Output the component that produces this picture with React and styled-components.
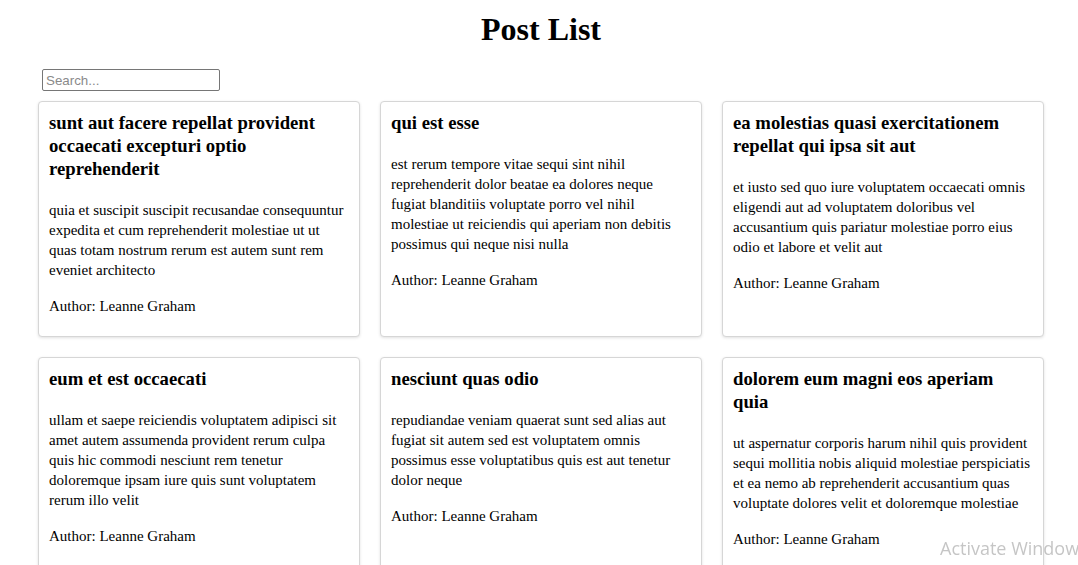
import React from "react";
import styled, { createGlobalStyle } from "styled-components";

const GlobalStyle = createGlobalStyle`
  html, body {
    margin: 0;
    padding: 0;
    background: #ffffff;
    font-family: "Liberation Serif", "Times New Roman", serif;
    color: #000;
  }
`;

const Page = styled.div`
  width: 1006px;
  margin-left: 38px;
  padding-top: 11px;
`;

const Title = styled.h1`
  margin: 0 0 21px;
  text-align: center;
  font-size: 32px;
  font-weight: bold;
  line-height: 37px;
`;

const SearchRow = styled.div`
  padding: 0 4px;
  margin-bottom: 10px;
  display: flex;
`;

const SearchInput = styled.input`
  box-sizing: border-box;
  width: 178px;
  height: 22px;
  padding: 1px 3px;
  border: 1px solid #767676;
  border-radius: 2px;
  font-family: "Liberation Sans", Arial, sans-serif;
  font-size: 13.33px;
  color: #000;
  outline: none;
  &::placeholder {
    color: #8a8a8a;
  }
`;

const Grid = styled.div`
  display: grid;
  grid-template-columns: repeat(3, 1fr);
  gap: 20px;
`;

const Card = styled.div`
  box-sizing: border-box;
  border: 1px solid #d6d6d6;
  border-radius: 4px;
  padding: 9px 10px 10px;
  box-shadow: 0 1px 3px rgba(0, 0, 0, 0.12);
  background: #fff;
`;

const CardTitle = styled.h3`
  margin: 0 0 20px;
  font-size: 18.72px;
  font-weight: bold;
  line-height: 23px;
`;

const Body = styled.p`
  margin: 0 0 16px;
  font-size: 15px;
  line-height: 20px;
`;

const Author = styled.p`
  margin: 0 0 10px;
  font-size: 15px;
  line-height: 20px;
`;

const Watermark = styled.div`
  position: fixed;
  left: 940px;
  top: 536px;
  font-family: "Open Sans", "Noto Sans", sans-serif;
  font-size: 18px;
  color: rgba(150, 150, 150, 0.55);
  white-space: nowrap;
  pointer-events: none;
`;

const posts = [
  {
    id: 1,
    title: "sunt aut facere repellat provident occaecati excepturi optio reprehenderit",
    body: "quia et suscipit suscipit recusandae consequuntur expedita et cum reprehenderit molestiae ut ut quas totam nostrum rerum est autem sunt rem eveniet architecto",
  },
  {
    id: 2,
    title: "qui est esse",
    body: "est rerum tempore vitae sequi sint nihil reprehenderit dolor beatae ea dolores neque fugiat blanditiis voluptate porro vel nihil molestiae ut reiciendis qui aperiam non debitis possimus qui neque nisi nulla",
  },
  {
    id: 3,
    title: "ea molestias quasi exercitationem repellat qui ipsa sit aut",
    body: "et iusto sed quo iure voluptatem occaecati omnis eligendi aut ad voluptatem doloribus vel accusantium quis pariatur molestiae porro eius odio et labore et velit aut",
  },
  {
    id: 4,
    title: "eum et est occaecati",
    body: "ullam et saepe reiciendis voluptatem adipisci sit amet autem assumenda provident rerum culpa quis hic commodi nesciunt rem tenetur doloremque ipsam iure quis sunt voluptatem rerum illo velit",
  },
  {
    id: 5,
    title: "nesciunt quas odio",
    body: "repudiandae veniam quaerat sunt sed alias aut fugiat sit autem sed est voluptatem omnis possimus esse voluptatibus quis est aut tenetur dolor neque",
  },
  {
    id: 6,
    title: "dolorem eum magni eos aperiam quia",
    body: "ut aspernatur corporis harum nihil quis provident sequi mollitia nobis aliquid molestiae perspiciatis et ea nemo ab reprehenderit accusantium quas voluptate dolores velit et doloremque molestiae",
  },
];

export default function App() {
  return (
    <>
      <GlobalStyle />
      <Page>
        <Title>Post List</Title>
        <SearchRow>
          <SearchInput type="text" placeholder="Search..." />
        </SearchRow>
        <Grid>
          {posts.map((p) => (
            <Card key={p.id}>
              <CardTitle>{p.title}</CardTitle>
              <Body>{p.body}</Body>
              <Author>Author: Leanne Graham</Author>
            </Card>
          ))}
        </Grid>
      </Page>
      <Watermark>Activate Windows</Watermark>
    </>
  );
}
